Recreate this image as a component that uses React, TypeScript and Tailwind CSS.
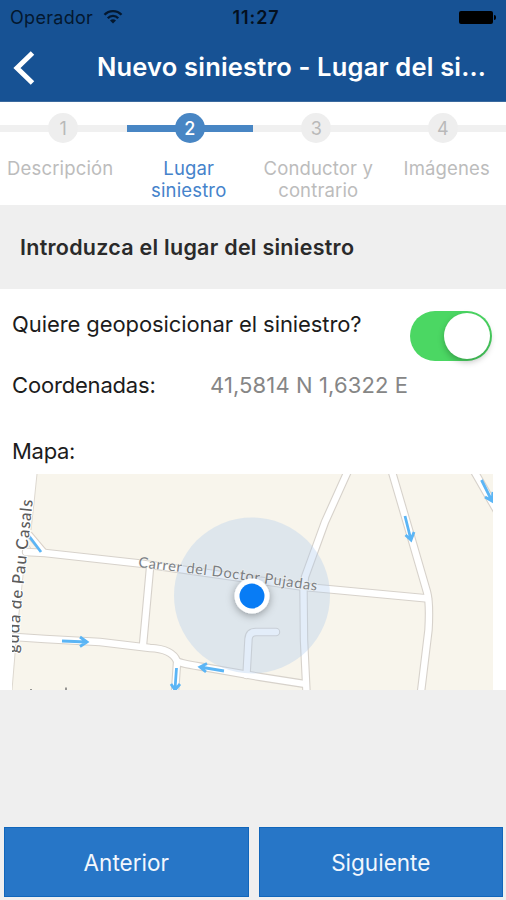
const STEPS = [
  { n: 1, label: 'Descripción', shift: '-left-[3px]' },
  { n: 2, label: 'Lugar siniestro', active: true, shift: '-left-[1px]' },
  { n: 3, label: 'Conductor y contrario', shift: 'left-[2px]' },
  { n: 4, label: 'Imágenes', shift: 'left-[4px]' },
];

const ROADS = [
  'M26 552 L45 553 L140 563.5 L305 587 L428 598.5',
  'M150 568 L143 645',
  'M15 637 L45 639 L100 642 L150 648 Q172 649 177 661 Q178 663 200 666.5 L260 677 L305 684',
  'M177 663 L175 692',
  'M246.500 675 L248.500 639 Q249 632 256 632 L276 632',
  'M347.500 472 L325 522 L305 577 L303.500 590 L304 640 L306.500 692',
  'M392 472 L409 530 L427 592 Q430 603 428.500 630 L421 692',
  'M474 471 L497 511',
];

const ARROWS = [
  'M62 641 L87 642 M80 637 L87 642 L80 646.500',
  'M224 671 L200 667 M207 663.500 L200 667 L206 672',
  'M176.500 668 L175 689 M171 684 L175 690 L180 684',
  'M405 516 L411 540 M405.500 535 L411 540 L414 532',
  'M481.500 480 L492 501 M485 497 L492 501 L493 492',
  'M29 536 L41 552',
];

function StatusBar() {
  return (
    <div className="flex h-[34px] items-center px-[10px] text-black">
      <div className="flex flex-1 items-center gap-[10px]">
        <span className="text-[18px] tracking-[0.3px] text-[#04182f]">Operador</span>
        <svg width="20" height="16" viewBox="0 0 20 16" fill="none" stroke="#04182f" strokeWidth="2.300">
          <path d="M1.500 5.800 C6 .8 14 .8 18.500 5.800" />
          <path d="M4.800 9.200 C7.500 6 12.500 6 15.200 9.200" />
          <path d="M10 14.500 L7 11.500 Q10 9 13 11.500 Z" fill="#04182f" stroke="none" />
        </svg>
      </div>
      <span className="pl-[6px] text-[18px] font-semibold tracking-[0.9px] text-[#04101f]">11:27</span>
      <div className="flex flex-1 items-center justify-end gap-[1px]">
        <div className="h-[13px] w-[34px] rounded-[2px] bg-black" />
        <div className="h-[5px] w-[2px] rounded-r bg-black" />
      </div>
    </div>
  );
}

function Step({ n, label, active, shift }: { n: number; label: string; active?: boolean; shift: string }) {
  return (
    <div className="flex flex-1 flex-col items-center">
      <div className="grid h-[30px] w-full grid-cols-1 place-items-center">
        <div className={`col-start-1 row-start-1 w-full ${active ? 'h-[7px] bg-[#4886c4]' : 'h-[7px] bg-[#f0f0f0]'}`} />
        <div
          className={`z-10 col-start-1 row-start-1 flex size-[30px] items-center justify-center rounded-full text-[18px] ${
            active ? 'bg-[#4886c4] font-medium text-white' : 'bg-[#eeeeee] text-[#b9b9b9]'
          }`}
        >
          {n}
        </div>
      </div>
      <div
        className={`relative mt-[14px] w-[115px] text-center text-[18.500px] leading-[22px] tracking-[0.15px] ${shift} ${
          active ? 'px-4 text-[#4583cb]' : 'text-[#bcbcbc]'
        }`}
      >
        {label}
      </div>
    </div>
  );
}

function MapView() {
  return (
    <svg className="block" width="481" height="216" viewBox="12 474 481 216">
      <defs>
        <path id="carrer" d="M138 567 L225 577.500 L318 591" />
        <path id="avenue" d="M17.500 667 Q18 650 20 620 Q25 570 34 490" />
        <filter id="dotShadow" x="-50%" y="-50%" width="200%" height="200%">
          <feDropShadow dx="0" dy="2" stdDeviation="4" floodColor="#000" floodOpacity="0.350" />
        </filter>
      </defs>
      <rect x="12" y="474" width="481" height="216" fill="#f8f5ec" />
      <path d="M12 474 H37 L34 503 L26 553 L16 637 L12 690 Z" fill="#fff" />
      <path d="M37 474 L34 503 L31 530 M25 557 L17 632 M16 642 L12 690" fill="none" stroke="#ddd8d0" />
      <path d="M27 543 L33 551 L26 551 Z" fill="#f4f1e8" stroke="#ddd8d0" />
      <path d="M29 534 L45 553" fill="none" stroke="#d9d0c7" strokeWidth="7" />
      <g fill="none" stroke="#d7d2cb" strokeWidth="8.500" strokeLinecap="round">
        {ROADS.map((d) => <path key={d} d={d} />)}
      </g>
      <path d="M29 534 L45 553" fill="none" stroke="#fff" strokeWidth="5" />
      <g fill="none" stroke="#fff" strokeWidth="6.300" strokeLinecap="round">
        {ROADS.map((d) => <path key={d} d={d} />)}
      </g>
      <circle cx="252" cy="595.500" r="78" fill="#a9c9ec" fillOpacity="0.330" />
      <g fill="none" stroke="#5bb5f5" strokeWidth="2.800">
        {ARROWS.map((d) => <path key={d} d={d} />)}
      </g>
      <g fontFamily="Lato, 'Open Sans', sans-serif">
        <text fontSize="14.500" fill="#7b7f84" stroke="#f6f5f1" strokeWidth="1.500" strokeOpacity="0.700" paintOrder="stroke">
          <textPath href="#carrer" textLength="180">Carrer del Doctor Pujadas</textPath>
        </text>
        <text fontSize="16.500" fontWeight="500" fill="#5c5c5c" stroke="#fff" strokeWidth="2" paintOrder="stroke">
          <textPath href="#avenue" startOffset="14" textLength="154">guda de Pau Casals</textPath>
        </text>
        <path d="M31 689 V690 M66 687.500 V690" stroke="#777" strokeWidth="1.500" />
      </g>
      <circle cx="252" cy="596" r="17.500" fill="#fff" filter="url(#dotShadow)" />
      <circle cx="252" cy="596" r="12.500" fill="#087cf5" />
    </svg>
  );
}

export default function App() {
  return (
    <div className="flex h-[900px] w-[506px] flex-col overflow-hidden bg-[#efefef] font-['Inter',sans-serif] text-[#1c1c1c]">
      <header className="h-[102px] shrink-0 border-b border-[#3b6a9e] bg-[#175294]">
        <StatusBar />
        <div className="flex h-[67px] items-center pl-[12px]">
          <svg width="24" height="36" viewBox="0 0 24 36" fill="none" stroke="#fff" strokeWidth="5">
            <path d="M20.500 3 L5 18 L20.500 33" />
          </svg>
          <h1 className="ml-[61px] whitespace-nowrap text-[25.500px] font-semibold tracking-[0.18px] text-white">Nuevo siniestro - Lugar del si...</h1>
        </div>
      </header>

      <nav className="flex h-[103px] shrink-0 bg-white pt-[11px]">
        {STEPS.map((s) => <Step key={s.n} {...s} />)}
      </nav>

      <div className="flex h-[84px] shrink-0 items-center pl-5 text-[21.500px] font-semibold tracking-[0.26px] text-[#2a2a2a]">
        Introduzca el lugar del siniestro
      </div>

      <main className="flex h-[401px] shrink-0 flex-col bg-white px-3 text-[22px]">
        <div className="mt-[20px] flex h-[54px] items-start justify-between pr-[2px]">
          <span className="whitespace-nowrap leading-[31px] tracking-[-0.09px]">Quiere geoposicionar el siniestro?</span>
          <div className="mt-[2px] flex h-[50px] w-[82px] items-center justify-end rounded-full bg-[#4bd763] p-[2px]">
            <div className="size-[46px] rounded-full bg-white shadow-[0_3px_6px_rgba(0,0,0,0.25)]" />
          </div>
        </div>
        <div className="mt-[6px] flex h-8 leading-[32px]">
          <span className="w-[198px] tracking-[-0.18px]">Coordenadas:</span>
          <span className="whitespace-nowrap tracking-[0.12px] text-[#868686]">41,5814 N 1,6322 E</span>
        </div>
        <div className="mt-[34px] h-8 leading-[32px] tracking-[-0.3px]">Mapa:</div>
        <div className="mt-[7px]">
          <MapView />
        </div>
      </main>

      <footer className="mt-auto mb-[3px] flex h-[70px] gap-[10px] px-1 pr-[3px]">
        <button className="flex-1 border border-[#1166bb] bg-[#2776c7] pt-[2px] text-[22.500px] text-[#f2f7fd]">Anterior</button>
        <button className="flex-1 border border-[#1166bb] bg-[#2776c7] pt-[2px] text-[22.500px] text-[#f2f7fd]">Siguiente</button>
      </footer>
    </div>
  );
}
